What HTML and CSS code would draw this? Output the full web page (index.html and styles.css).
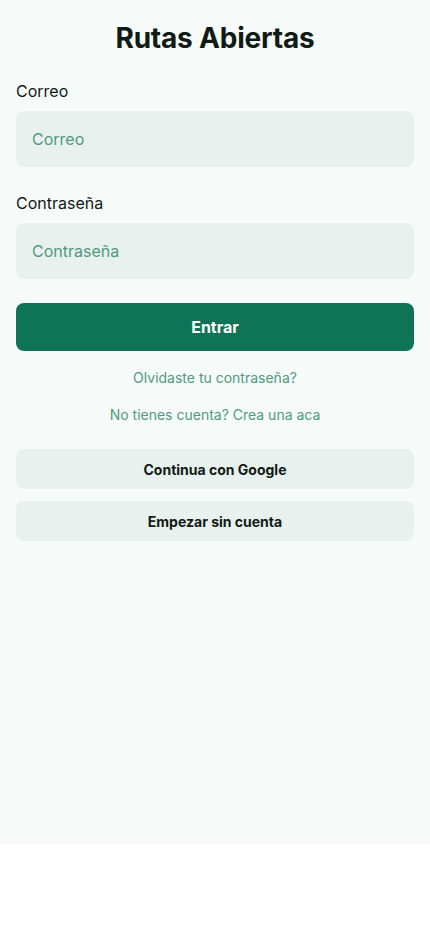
FILE: index.html
```html
<!DOCTYPE html>
<html lang="es">
<head>
<meta charset="utf-8">
<meta name="viewport" content="width=device-width, initial-scale=1">
<title>Rutas Abiertas</title>
<link rel="stylesheet" href="styles.css">
</head>
<body>
<main class="screen">
  <h1 class="title">Rutas Abiertas</h1>
  <form class="form">
    <label class="field">
      <span class="label">Correo</span>
      <input class="input" type="email" placeholder="Correo">
    </label>
    <label class="field">
      <span class="label">Contraseña</span>
      <input class="input" type="password" placeholder="Contraseña">
    </label>
    <button type="button" class="btn-primary">Entrar</button>
  </form>
  <div class="links">
    <a class="link" href="#">Olvidaste tu contraseña?</a>
    <a class="link" href="#">No tienes cuenta? Crea una aca</a>
  </div>
  <div class="alt">
    <button type="button" class="btn-secondary">Continua con Google</button>
    <button type="button" class="btn-secondary">Empezar sin cuenta</button>
  </div>
</main>
</body>
</html>
```
FILE: styles.css
```css
* { box-sizing: border-box; }
html, body { margin: 0; padding: 0; background: #ffffff; }
body { font-family: Inter, "Noto Sans", "Liberation Sans", sans-serif; color: #111a16; }
.screen {
  min-height: 844px;
  background: #f6faf8;
  padding: 20px 16px;
  display: flex;
  flex-direction: column;
}
.title {
  margin: 0;
  text-align: center;
  font-size: 28px;
  font-weight: 700;
  line-height: 36px;
  color: #111a16;
  letter-spacing: -0.2px;
}
.form { display: flex; flex-direction: column; margin-top: 23px; }
.field { display: flex; flex-direction: column; margin-bottom: 24px; }
.label { font-size: 16px; line-height: 24px; font-weight: 400; color: #111a16; padding-bottom: 8px; }
.input {
  height: 56px;
  border: none;
  border-radius: 8px;
  background: #e8f1ee;
  padding: 0 16px;
  font: inherit;
  font-size: 16px;
  color: #111a16;
  outline: none;
}
.input::placeholder { color: #4f9a80; }
.btn-primary {
  height: 48px;
  border: none;
  border-radius: 8px;
  background: #0f7455;
  color: #ffffff;
  font: inherit;
  font-size: 16px;
  font-weight: 700;
}
.links { display: flex; flex-direction: column; align-items: center; margin-top: 16px; gap: 16px; }
.link { font-size: 14px; line-height: 21px; color: #4f9a80; text-decoration: none; }
.alt { display: flex; flex-direction: column; gap: 12px; margin-top: 24px; }
.btn-secondary {
  height: 40px;
  border: none;
  border-radius: 8px;
  background: #e8f1ee;
  color: #111a16;
  font: inherit;
  font-size: 14px;
  font-weight: 700;
}
```
